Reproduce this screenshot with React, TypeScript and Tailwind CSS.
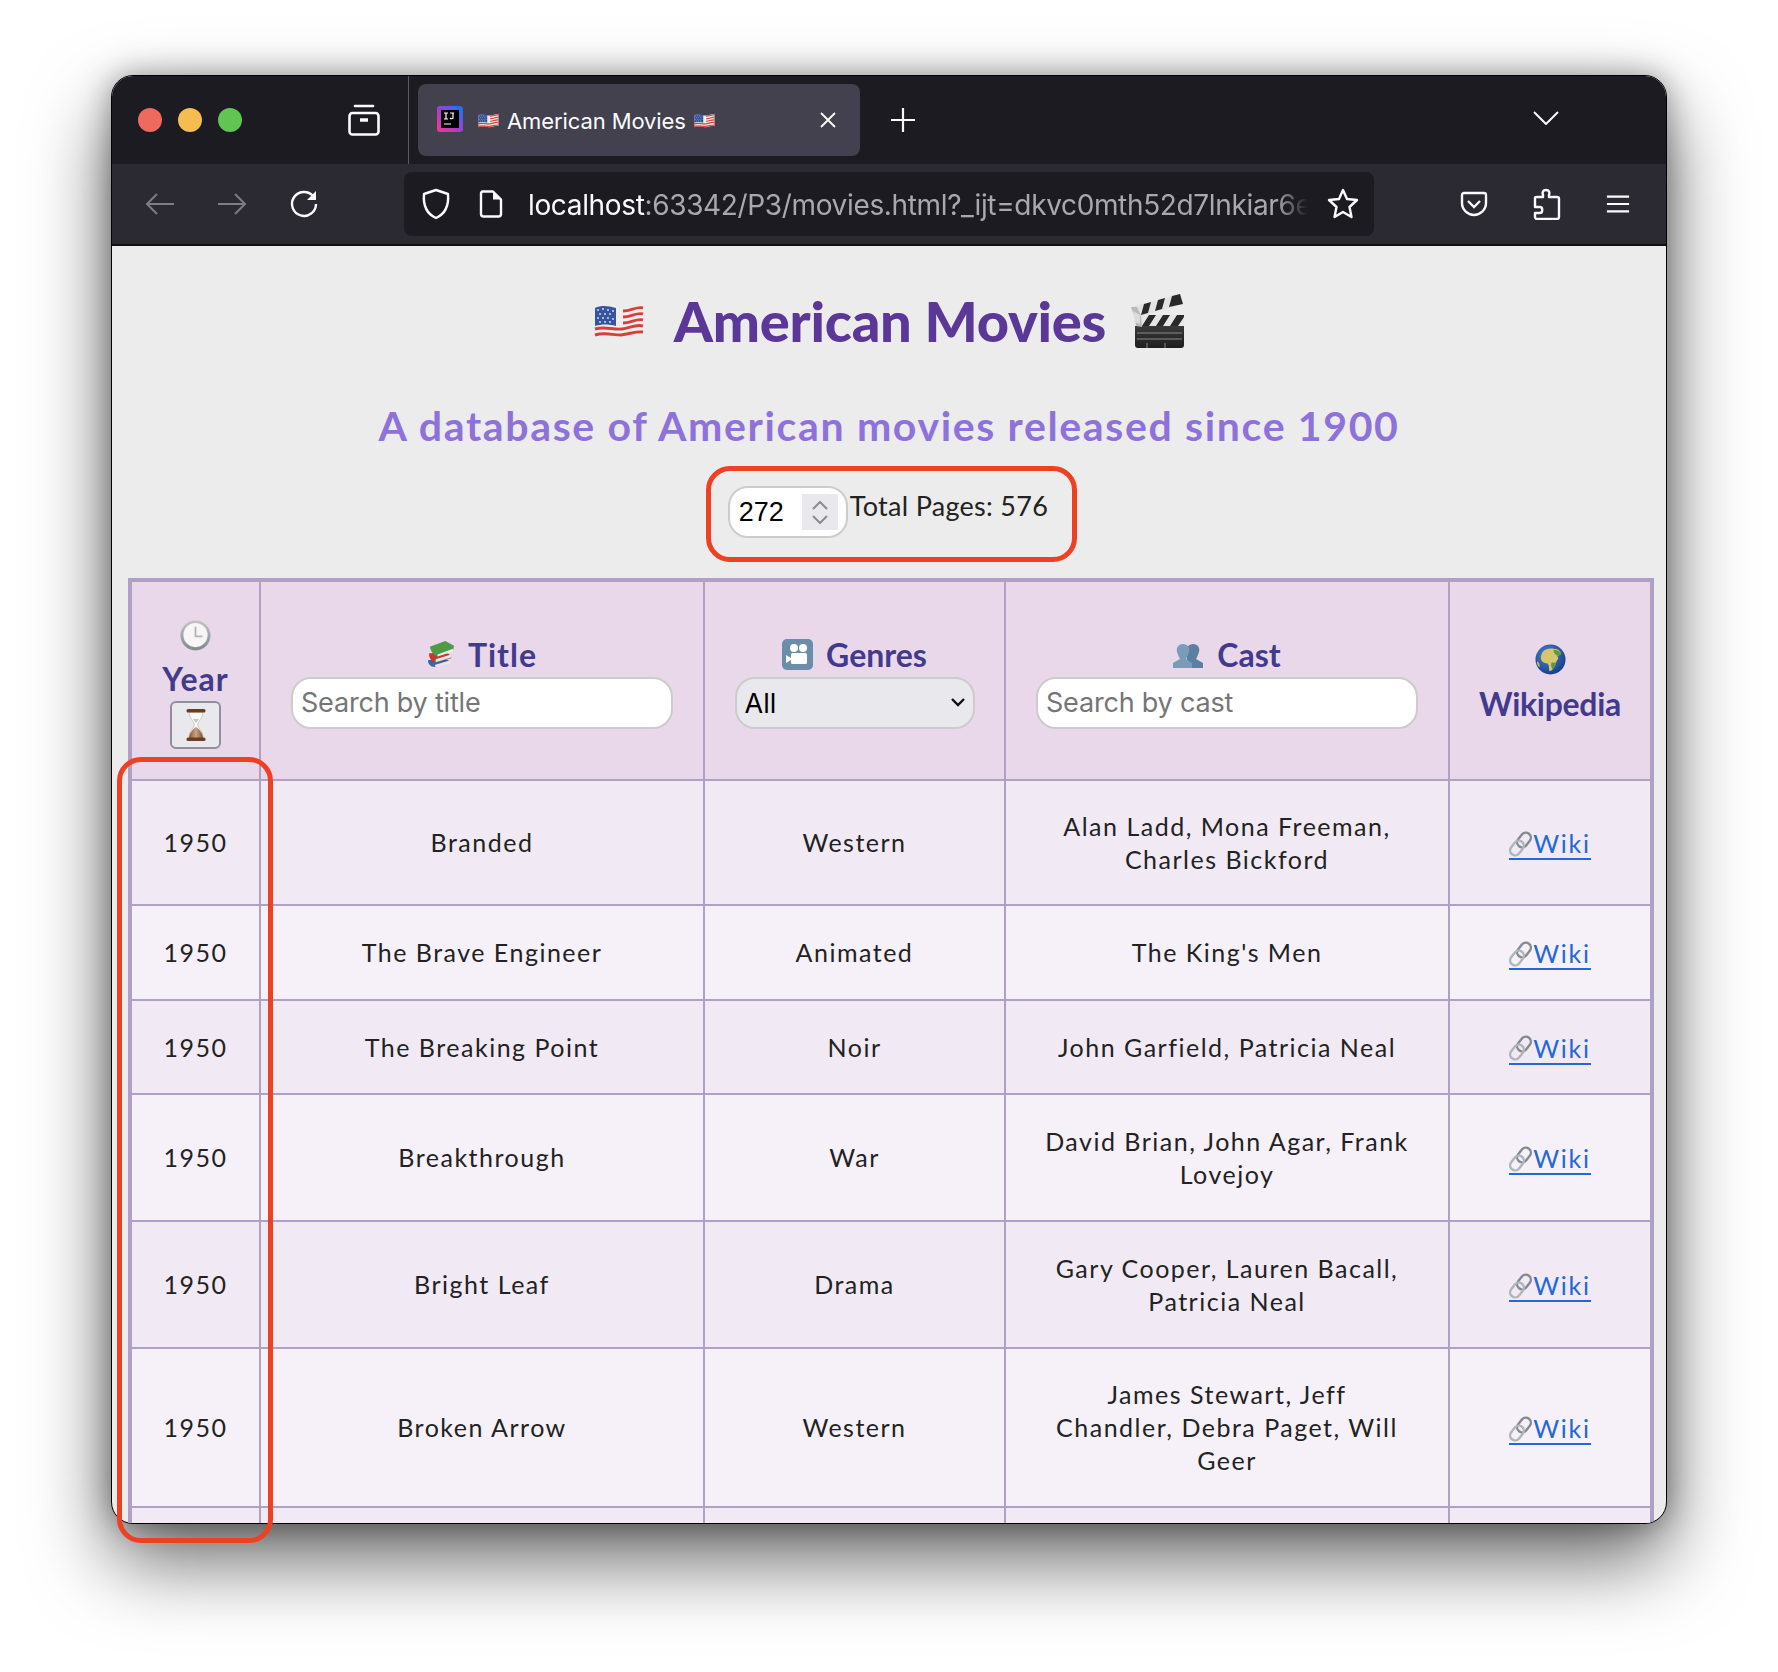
import React from "react";

const rows = [
  { title: "Branded", genre: "Western", cast: ["Alan Ladd, Mona Freeman,", "Charles Bickford"], h: "h-[125px]", bg: "bg-[#f1eaf4]" },
  { title: "The Brave Engineer", genre: "Animated", cast: ["The King's Men"], h: "h-[95px]", bg: "bg-[#f6f0f9]" },
  { title: "The Breaking Point", genre: "Noir", cast: ["John Garfield, Patricia Neal"], h: "h-[94px]", bg: "bg-[#f1eaf4]" },
  { title: "Breakthrough", genre: "War", cast: ["David Brian, John Agar, Frank", "Lovejoy"], h: "h-[127px]", bg: "bg-[#f6f0f9]" },
  { title: "Bright Leaf", genre: "Drama", cast: ["Gary Cooper, Lauren Bacall,", "Patricia Neal"], h: "h-[127px]", bg: "bg-[#f1eaf4]" },
  { title: "Broken Arrow", genre: "Western", cast: ["James Stewart, Jeff", "Chandler, Debra Paget, Will", "Geer"], h: "h-[159px]", bg: "bg-[#f6f0f9]" },
];

function Flag({ className }: { className: string }) {
  return (
    <svg viewBox="0 0 50 36" className={className}>
      <path d="M1 5c10-4 18 1 28 1 8 0 14-5 20-3v28c-8-2-13 3-22 3-10 0-17-3-26 0z" fill="#f3ecec" />
      <g fill="none" strokeWidth="2.900" stroke="#d6403c">
        <path d="M29 8c8 0 14-5 20-3" />
        <path d="M29 14c8 0 14-5 20-3" />
        <path d="M29 20c8 0 14-5 20-3" />
        <path d="M1 26c10-3 18 1 27 0 8-1 14-5 21-3" />
        <path d="M1 32c10-3 17 0 26 0 9-1 15-4 22-3" />
      </g>
      <path d="M1 5c7-3 13-2 21 0v18c-8-2-14-2-21 0z" fill="#35569e" />
      <g fill="#dfe6f5">
        <circle cx="4" cy="7" r="0.900" /><circle cx="9" cy="6" r="0.900" /><circle cx="14" cy="7" r="0.900" /><circle cx="19" cy="8" r="0.900" />
        <circle cx="6" cy="11" r="0.900" /><circle cx="11" cy="11" r="0.900" /><circle cx="16" cy="11" r="0.900" />
        <circle cx="4" cy="15" r="0.900" /><circle cx="9" cy="15" r="0.900" /><circle cx="14" cy="15" r="0.900" /><circle cx="19" cy="16" r="0.900" />
        <circle cx="6" cy="19" r="0.900" /><circle cx="11" cy="19" r="0.900" /><circle cx="16" cy="19" r="0.900" />
      </g>
    </svg>
  );
}

function Clapper() {
  return (
    <svg viewBox="0 0 55 54" className="w-[55px] h-[54px] shrink-0">
      <defs>
        <linearGradient id="clapBody" x1="0" y1="0" x2="0" y2="1">
          <stop offset="0" stopColor="#3a3a3a" />
          <stop offset="1" stopColor="#1e1e1e" />
        </linearGradient>
      </defs>
      <path d="M6 32h49v19a3 3 0 0 1-3 3H9a3 3 0 0 1-3-3z" fill="url(#clapBody)" />
      <path d="M8 39h45M8 45h45M18 49v5M36 49v5" stroke="#8a8a8a" strokeWidth="1" />
      <rect x="6" y="21" width="49" height="11" fill="#e6e6e6" />
      <path d="M13 32l7-11h7l-7 11zM27 32l7-11h7l-7 11zM41 32l7-11h7v2l-6 9z" fill="#2a2a2a" />
      <path d="M2 13L51 0l3 10L6 24z" fill="#e3e3e3" />
      <path d="M12 21l3-11 7-2-3 11zM26 17l3-11 7-2-3 11zM40 13l3-11 8-2 3 10z" fill="#2a2a2a" />
      <path d="M2 13l4 11 1 8 6 1-1-11-4-9z" fill="#b9b9b9" />
      <path d="M4 17l7 4v9l-5-2z" fill="#dcdcdc" />
    </svg>
  );
}

function Clock() {
  return (
    <svg viewBox="0 0 32 32" className="w-[31px] h-[31px] mx-auto block">
      <defs>
        <linearGradient id="clockRim" x1="0" y1="0" x2="0" y2="1">
          <stop offset="0" stopColor="#c4c4c4" />
          <stop offset="1" stopColor="#7f8a8a" />
        </linearGradient>
      </defs>
      <circle cx="16" cy="16" r="15.500" fill="url(#clockRim)" />
      <circle cx="16" cy="15.500" r="12.500" fill="#f7f5f5" />
      <path d="M16 7v10h7" fill="none" stroke="#b3b3b3" strokeWidth="1.800" />
    </svg>
  );
}

function Books() {
  return (
    <svg viewBox="0 0 28 28" className="w-[27px] h-[27px] shrink-0">
      <path d="M1 20l17-2 6 3-16 6c-4 0-7-3-7-7z" fill="#3b62a8" />
      <path d="M8 25l16-5v3L9 27z" fill="#e7e7e7" />
      <path d="M2 13l16-2 7 4v3L9 22c-4 0-7-4-7-9z" fill="#c43a2c" />
      <path d="M9 19l16-5v3L9 22z" fill="#e7e7e7" />
      <path d="M3 6L19 0l9 5-1 5-16 6c-4-1-7-5-8-10z" fill="#4d9b46" />
      <path d="M11 14l16-6v3l-16 5z" fill="#eeeeee" />
    </svg>
  );
}

function Camera() {
  return (
    <svg viewBox="0 0 31 31" className="w-[31px] h-[31px] shrink-0">
      <rect width="31" height="31" rx="5" fill="#6a8eaa" />
      <circle cx="12" cy="9" r="4" fill="#fff" />
      <circle cx="21" cy="9" r="4" fill="#fff" />
      <rect x="9" y="14" width="16" height="11" rx="1.500" fill="#fff" />
      <path d="M9 19l-5-3v8l5-3z" fill="#fff" />
    </svg>
  );
}

function Busts() {
  return (
    <svg viewBox="0 0 31 26" className="w-[31px] h-[26px] shrink-0">
      <path d="M20 2c5 0 7 4 6 8-1 3-2 5-3 7l7 4v5H14V15c-2-4-1-13 6-13z" fill="#5b7f9f" />
      <path d="M10 2c5 0 7 4 6 8-1 3-2 5-3 7l6 4v5H0v-5l7-4c-1-2-2-4-3-7-1-4 1-8 6-8z" fill="#7a9cb8" />
    </svg>
  );
}

function Globe() {
  return (
    <svg viewBox="0 0 32 32" className="w-[31px] h-[31px] mx-auto block">
      <defs>
        <radialGradient id="globeSea" cx="0.4" cy="0.35" r="0.7">
          <stop offset="0" stopColor="#4a86d8" />
          <stop offset="1" stopColor="#173a86" />
        </radialGradient>
      </defs>
      <circle cx="16" cy="16" r="15.500" fill="url(#globeSea)" />
      <path d="M8 8c3-3 8-4 11-3 3 0 6 1 8 4 0 2-2 3-4 3l1 3c-2 3-3 5-4 8-1 3-3 5-5 5-1-3 0-6-2-8-4 0-7-2-7-6 0-2 1-4 2-6z" fill="#d8c66a" />
      <path d="M19 6c3 0 6 1 8 3 0 2-2 3-4 3-2-1-4-3-4-6zM17 19c2 0 4 0 5 1-1 3-3 6-4 6-1-2-2-4-1-7z" fill="#5c9a45" />
      <path d="M2 18c2 0 3 3 3 6-2-1-3-3-3-6z" fill="#c9b85c" />
    </svg>
  );
}

function Hourglass() {
  return (
    <svg viewBox="0 0 20 32" className="w-[20px] h-[32px]">
      <defs>
        <linearGradient id="sand" x1="0" y1="0" x2="1" y2="0">
          <stop offset="0" stopColor="#7d5a42" />
          <stop offset="0.5" stopColor="#c9a481" />
          <stop offset="1" stopColor="#77533b" />
        </linearGradient>
      </defs>
      <path d="M3 3h14c0 6-5 9-5.500 13 .5 3 5.500 6 5.500 13H3c0-7 5-10 5.500-13C8 12 3 9 3 3z" fill="#fbfbfb" stroke="#b8b4b4" strokeWidth="0.600" />
      <path d="M3 29c0-5 4-9 7-11 3 2 7 6 7 11z" fill="url(#sand)" />
      <path d="M7 10h6l-3 4z" fill="#c9c3bd" />
      <rect x="0.500" y="0" width="19" height="3.500" rx="1.500" fill="#6b3d22" />
      <rect x="0.500" y="28.500" width="19" height="3.500" rx="1.500" fill="#6b3d22" />
    </svg>
  );
}

function ChainIcon() {
  return (
    <svg viewBox="0 0 24 26" className="w-[24px] h-[26px] shrink-0">
      <g fill="none" stroke="#858a90" strokeWidth="2.400">
        <rect x="10" y="1" width="10" height="16" rx="5" transform="rotate(38 15 9)" />
        <rect x="3" y="9" width="10" height="16" rx="5" transform="rotate(38 8 17)" stroke="#b0b5ba" />
      </g>
    </svg>
  );
}

function WikiLink() {
  return (
    <a href="#" className="flex w-fit mx-auto mt-[4px] items-center h-[31px] text-[#2468d8] border-b-2 border-[#2468d8] tracking-[1.700px]">
      <ChainIcon />
      <span>Wiki</span>
    </a>
  );
}

function TraySvg() {
  return (
    <svg viewBox="0 0 32 32" className="w-[32px] h-[32px]" fill="none" stroke="#fbfbfe" strokeWidth="2.600">
      <path d="M7 2h18" strokeLinecap="round" />
      <rect x="1.500" y="9" width="29" height="21.500" rx="3" />
      <path d="M12 16h8" strokeWidth="3.500" />
    </svg>
  );
}

export default function App() {
  return (
    <div className="relative w-[1778px] h-[1672px] bg-white pt-[75px] pl-[111px] font-['Inter',sans-serif]">
      <div className="w-[1556px] h-[1449px] rounded-[22px] overflow-hidden border border-black bg-[#ececec] shadow-[0_36px_80px_rgba(0,0,0,0.6),0_0_30px_rgba(0,0,0,0.35)]">
        {/* tab strip */}
        <div className="h-[88px] bg-[#1c1b22] flex items-center text-[#fbfbfe]">
          <div className="flex items-center gap-[16px] pl-[26px] w-[212px]">
            <span className="w-[24px] h-[24px] rounded-full bg-[#ee6a5f]" />
            <span className="w-[24px] h-[24px] rounded-full bg-[#f5bd4f]" />
            <span className="w-[24px] h-[24px] rounded-full bg-[#61c554]" />
          </div>
          <div className="w-[84px] flex justify-start pl-[24px]">
            <TraySvg />
          </div>
          <div className="w-px h-full bg-[#5b5a62]" />
          <div className="ml-[9px] w-[442px] h-[72px] rounded-[8px] bg-[#42414d] flex items-center pl-[19px] pr-[23px]">
            <svg viewBox="0 0 26 26" className="w-[26px] h-[26px] shrink-0 -mt-[3px]">
              <defs>
                <linearGradient id="ij" x1="0" y1="1" x2="1" y2="0">
                  <stop offset="0" stopColor="#ff318c" />
                  <stop offset="0.5" stopColor="#a040d0" />
                  <stop offset="1" stopColor="#087cfa" />
                </linearGradient>
              </defs>
              <rect width="26" height="26" rx="3" fill="url(#ij)" />
              <rect x="4" y="4" width="18" height="18" fill="#000" />
              <path d="M7 7h4M9 7v6M7 13h4M13 7h4M16 7v5c0 1-2 1-3 0M7 18h7" stroke="#fff" strokeWidth="1.200" fill="none" />
            </svg>
            <Flag className="w-[21px] h-[15px] ml-[15px] shrink-0" />
            <span className="ml-[8px] mt-[2px] text-[22px] leading-none tracking-[-0.1px] whitespace-nowrap">American Movies</span>
            <Flag className="w-[21px] h-[15px] ml-[8px] shrink-0" />
            <svg viewBox="0 0 18 18" className="w-[18px] h-[18px] ml-auto" stroke="#fbfbfe" strokeWidth="1.800" fill="none">
              <path d="M2 2l14 14M16 2L2 16" />
            </svg>
          </div>
          <svg viewBox="0 0 26 26" className="w-[26px] h-[26px] ml-[30px]" stroke="#fbfbfe" strokeWidth="2.200" fill="none">
            <path d="M13 1v24M1 13h24" />
          </svg>
          <svg viewBox="0 0 26 14" className="w-[26px] h-[14px] ml-[617px] -mt-[4px]" stroke="#fbfbfe" strokeWidth="2" fill="none">
            <path d="M1 1l12 12L25 1" />
          </svg>
        </div>

        {/* toolbar */}
        <div className="h-[82px] bg-[#2b2a33] flex items-center border-b-2 border-[#111]">
          <svg viewBox="0 0 30 24" className="w-[30px] h-[24px] ml-[33px]" stroke="#7e7d85" strokeWidth="2" fill="none">
            <path d="M29 12H2M12 2L2 12l10 10" />
          </svg>
          <svg viewBox="0 0 30 24" className="w-[30px] h-[24px] ml-[42px]" stroke="#7e7d85" strokeWidth="2" fill="none">
            <path d="M1 12h27M18 2l10 10-10 10" />
          </svg>
          <svg viewBox="0 0 30 30" className="w-[30px] h-[30px] ml-[42px]" stroke="#fbfbfe" strokeWidth="2.400" fill="none">
            <path d="M24 7a12 12 0 1 0 3 8" />
            <path d="M27 2v9h-9z" fill="#fbfbfe" stroke="none" />
          </svg>
          <div className="ml-[85px] w-[970px] h-[64px] rounded-[8px] bg-[#1c1b22] flex items-center pl-[17px] pr-[15px]">
            <svg viewBox="0 0 30 32" className="w-[30px] h-[32px] shrink-0" stroke="#fbfbfe" strokeWidth="2.400" fill="none">
              <path d="M15 2l12 4c1 12-3 20-12 24C6 26 2 18 3 6z" strokeLinejoin="round" />
            </svg>
            <svg viewBox="0 0 24 28" className="w-[24px] h-[28px] ml-[28px] shrink-0" stroke="#fbfbfe" strokeWidth="2.400" fill="none">
              <path d="M3 1.500h11l8 8V24a2.500 2.500 0 0 1-2.500 2.500h-15A2.500 2.500 0 0 1 2 24V3z" strokeLinejoin="round" />
              <path d="M14 1.500v8h8" fill="#fbfbfe" stroke="none" />
            </svg>
            <div className="ml-[25px] mt-[2px] w-[780px] text-[28px] leading-[34px] tracking-[-0.35px] text-[#a9a8ad] whitespace-nowrap [mask-image:linear-gradient(to_right,black_96%,transparent)]">
              <span className="text-[#fbfbfe]">localhost</span>:63342/P3/movies.html?_ijt=dkvc0mth52d7lnkiar6e
            </div>
            <svg viewBox="0 0 32 32" className="w-[32px] h-[32px] ml-auto shrink-0" stroke="#fbfbfe" strokeWidth="2.400" fill="none">
              <path d="M16 2l4 9 10 1-7.500 7 2 10L16 24l-8.500 5 2-10L2 12l10-1z" strokeLinejoin="round" />
            </svg>
          </div>
          <svg viewBox="0 0 28 26" className="w-[28px] h-[26px] ml-[86px]" stroke="#fbfbfe" strokeWidth="2.400" fill="none">
            <path d="M4 2h20a2 2 0 0 1 2 2v8c0 7-6 12-12 12S2 19 2 12V4a2 2 0 0 1 2-2z" />
            <path d="M8 10l6 6 6-6" />
          </svg>
          <svg viewBox="0 0 28 32" className="w-[28px] h-[32px] ml-[45px]" stroke="#fbfbfe" strokeWidth="2.400" fill="none">
            <path d="M13 2c3 0 4 2 3 5v2h8c1 0 2 1 2 2v18c0 1-1 2-2 2H4c-1 0-2-1-2-2v-4h5c3 0 3-6 0-6H2v-9c0-1 1-1 2-1h6V7c-1-3 0-5 3-5z" strokeLinejoin="round" />
          </svg>
          <svg viewBox="0 0 26 22" className="w-[24px] h-[22px] ml-[45px]" stroke="#fbfbfe" strokeWidth="2.400" fill="none">
            <path d="M1 3h24M1 11h24M1 19h24" />
          </svg>
        </div>

        {/* page */}
        <div className="font-['Lato',sans-serif]">
          <h1 className="h-[112px] pt-[38px] flex items-center justify-center text-[56px] leading-none font-black text-[#5b3798]">
            <Flag className="w-[50px] h-[36px] mr-[30px]" />
            <span className="-tracking-[0.25px]">American Movies</span>
            <span className="ml-[23px]"><Clapper /></span>
          </h1>
          <h2 className="mt-[46px] h-[44px] text-center text-[41px] leading-[44px] font-bold tracking-[1.65px] text-[#8f71db]">
            A database of American movies released since 1900
          </h2>
          <div className="mt-[38px] h-[55px] flex justify-center items-start pr-[2px] text-[#222]">
            <div className="w-[120px] h-[52px] rounded-[20px] border-2 border-[#cccccc] bg-white flex items-center pl-[9px] font-['Liberation_Sans',sans-serif] text-[27px] text-black">
              <span className="w-[63px]">272</span>
              <div className="w-[36px] h-[36px] bg-[#e9e9ed] flex flex-col items-center justify-center gap-[5px]">
                <svg viewBox="0 0 16 9" className="w-[16px] h-[9px]" stroke="#8a8a92" strokeWidth="2" fill="none"><path d="M1 8l7-7 7 7" /></svg>
                <svg viewBox="0 0 16 9" className="w-[16px] h-[9px]" stroke="#8a8a92" strokeWidth="2" fill="none"><path d="M1 1l7 7 7-7" /></svg>
              </div>
            </div>
            <span className="ml-[2px] mt-[2px] text-[27px] leading-[36px] tracking-[0.3px] whitespace-nowrap">Total Pages: 576</span>
          </div>
          <div className="mt-[37px] pl-[16px]">
            <table className="w-[1526px] table-fixed border-collapse border-4 border-[#b0a0c6] text-[25px] leading-[33px] tracking-[1.5px] text-[#222] text-center">
              <colgroup>
                <col className="w-[130px]" />
                <col className="w-[444px]" />
                <col className="w-[301px]" />
                <col className="w-[444px]" />
                <col className="w-[203px]" />
              </colgroup>
              <thead>
                <tr className="h-[200px] bg-[#e8d8ea] text-[#433a8c] text-[32px] leading-[47px]">
                  <th className="border-2 border-[#b0a0c6] p-0 pt-[8px] font-bold tracking-normal">
                    <Clock />
                    <div className="h-[50px] pt-[3px] leading-[50px] tracking-[1px]">Year</div>
                    <button className="mx-auto w-[51px] h-[48px] rounded-[6px] border-2 border-[#8f8f9d] bg-[#e9e9ed] flex items-center justify-center">
                      <Hourglass />
                    </button>
                  </th>
                  <th className="border-2 border-[#b0a0c6] p-0 font-bold tracking-normal">
                    <div className="flex items-center justify-center gap-[14px] h-[44px] tracking-[1px]"><Books />Title</div>
                    <input placeholder="Search by title" className="block mx-auto w-[382px] h-[52px] rounded-[20px] border-2 border-[#cccccc] bg-white px-[8px] font-['Inter',sans-serif] font-normal text-[27px] tracking-[-0.2px] placeholder:text-[#757575]" />
                  </th>
                  <th className="border-2 border-[#b0a0c6] p-0 font-bold tracking-normal">
                    <div className="flex items-center justify-center gap-[13px] h-[44px]"><Camera />Genres</div>
                    <div className="relative mx-auto w-[240px] h-[52px]">
                      <select className="w-full h-full appearance-none rounded-[20px] border-2 border-[#cccccc] bg-[#e9e9ed] pl-[8px] font-['Inter',sans-serif] font-normal text-[27px] text-black">
                        <option>All</option>
                      </select>
                      <svg viewBox="0 0 14 9" className="absolute right-[10px] top-[21px] w-[14px] h-[9px]" stroke="#111" strokeWidth="2.400" fill="none"><path d="M1 1l6 6 6-6" /></svg>
                    </div>
                  </th>
                  <th className="border-2 border-[#b0a0c6] p-0 font-bold tracking-normal">
                    <div className="flex items-center justify-center gap-[13px] h-[44px]"><Busts />Cast</div>
                    <input placeholder="Search by cast" className="block mx-auto w-[382px] h-[52px] rounded-[20px] border-2 border-[#cccccc] bg-white px-[8px] font-['Inter',sans-serif] font-normal text-[27px] tracking-[-0.2px] placeholder:text-[#757575]" />
                  </th>
                  <th className="border-2 border-[#b0a0c6] p-0 pt-[8px] font-bold -tracking-[0.3px]">
                    <Globe />
                    <div className="h-[50px] pt-[4px] leading-[50px]">Wikipedia</div>
                  </th>
                </tr>
              </thead>
              <tbody>
                {rows.map((r) => (
                  <tr key={r.title} className={`${r.h} ${r.bg}`}>
                    <td className="border-2 border-[#b0a0c6] p-0">1950</td>
                    <td className="border-2 border-[#b0a0c6] p-0">{r.title}</td>
                    <td className="border-2 border-[#b0a0c6] p-0">{r.genre}</td>
                    <td className="border-2 border-[#b0a0c6] p-0">
                      {r.cast.map((line) => (
                        <div key={line}>{line}</div>
                      ))}
                    </td>
                    <td className="border-2 border-[#b0a0c6] p-0"><WikiLink /></td>
                  </tr>
                ))}
                <tr className="h-[95px] bg-[#f1eaf4]">
                  <td className="border-2 border-[#b0a0c6]" />
                  <td className="border-2 border-[#b0a0c6]" />
                  <td className="border-2 border-[#b0a0c6]" />
                  <td className="border-2 border-[#b0a0c6]" />
                  <td className="border-2 border-[#b0a0c6]" />
                </tr>
              </tbody>
            </table>
          </div>
        </div>
      </div>

      {/* annotations */}
      <div className="absolute left-[706px] top-[466px] w-[371px] h-[96px] rounded-[24px] border-[5px] border-[#ee4123]" />
      <div className="absolute left-[117px] top-[757px] w-[156px] h-[786px] rounded-[24px] border-[5px] border-[#ee4123]" />
    </div>
  );
}
